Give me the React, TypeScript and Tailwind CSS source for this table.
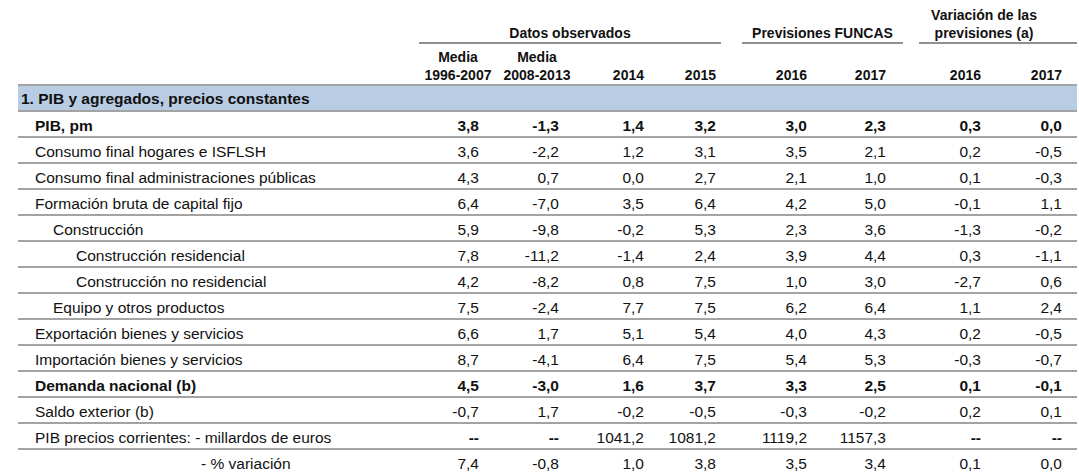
import React from 'react';

type Row = {
  label: string;
  indent: 0 | 1 | 2 | 3;
  bold?: boolean;
  values: string[];
};

const rows: Row[] = [
  { label: 'PIB, pm', indent: 0, bold: true, values: ['3,8', '-1,3', '1,4', '3,2', '3,0', '2,3', '0,3', '0,0'] },
  { label: 'Consumo final hogares e ISFLSH', indent: 0, values: ['3,6', '-2,2', '1,2', '3,1', '3,5', '2,1', '0,2', '-0,5'] },
  { label: 'Consumo final administraciones públicas', indent: 0, values: ['4,3', '0,7', '0,0', '2,7', '2,1', '1,0', '0,1', '-0,3'] },
  { label: 'Formación bruta de capital fijo', indent: 0, values: ['6,4', '-7,0', '3,5', '6,4', '4,2', '5,0', '-0,1', '1,1'] },
  { label: 'Construcción', indent: 1, values: ['5,9', '-9,8', '-0,2', '5,3', '2,3', '3,6', '-1,3', '-0,2'] },
  { label: 'Construcción residencial', indent: 2, values: ['7,8', '-11,2', '-1,4', '2,4', '3,9', '4,4', '0,3', '-1,1'] },
  { label: 'Construcción no residencial', indent: 2, values: ['4,2', '-8,2', '0,8', '7,5', '1,0', '3,0', '-2,7', '0,6'] },
  { label: 'Equipo y otros productos', indent: 1, values: ['7,5', '-2,4', '7,7', '7,5', '6,2', '6,4', '1,1', '2,4'] },
  { label: 'Exportación bienes y servicios', indent: 0, values: ['6,6', '1,7', '5,1', '5,4', '4,0', '4,3', '0,2', '-0,5'] },
  { label: 'Importación bienes y servicios', indent: 0, values: ['8,7', '-4,1', '6,4', '7,5', '5,4', '5,3', '-0,3', '-0,7'] },
  { label: 'Demanda nacional (b)', indent: 0, bold: true, values: ['4,5', '-3,0', '1,6', '3,7', '3,3', '2,5', '0,1', '-0,1'] },
  { label: 'Saldo exterior (b)', indent: 0, values: ['-0,7', '1,7', '-0,2', '-0,5', '-0,3', '-0,2', '0,2', '0,1'] },
  { label: 'PIB precios corrientes: - millardos de euros', indent: 0, values: ['--', '--', '1041,2', '1081,2', '1119,2', '1157,3', '--', '--'] },
  { label: '- % variación', indent: 3, values: ['7,4', '-0,8', '1,0', '3,8', '3,5', '3,4', '0,1', '0,0'] },
];

const grid = 'grid grid-cols-[401px_78px_80px_76px_68px_101px_81px_92px_82px]';

// right padding per numeric column, so the figures line up under the headers
const padRight = ['pr-[18px]', 'pr-[18px]', 'pr-[9px]', 'pr-[5px]', 'pr-[15px]', 'pr-[17px]', 'pr-[14px]', 'pr-[15px]'];

const indentClass = ['pl-[17px]', 'pl-[35px]', 'pl-[58px]', 'pl-[183px]'];

const years = ['2014', '2015', '2016', '2017', '2016', '2017'];

function GroupHeader() {
  return (
    <div className={`${grid} h-[44px] text-[14px] font-bold leading-[18px]`}>
      <div />
      <div className="col-span-4 flex flex-col justify-end">
        <div className="text-center">Datos observados</div>
        <div className="h-[2px] bg-[#8f8f8f]" />
      </div>
      <div className="col-span-2 flex flex-col justify-end pl-[21px]">
        <div className="text-center">Previsiones FUNCAS</div>
        <div className="h-[2px] bg-[#8f8f8f]" />
      </div>
      <div className="col-span-2 flex flex-col justify-end pl-[16px]">
        <div className="pr-[28px] text-center">
          Variación de las
          <br />
          previsiones (a)
        </div>
        <div className="h-[2px] bg-[#8f8f8f]" />
      </div>
    </div>
  );
}

function ColumnHeader() {
  return (
    <div className={`${grid} h-[40px] text-[14px] font-bold leading-[18px]`}>
      <div />
      <div className="flex flex-col justify-end pt-[4px] text-center">
        <span>Media</span>
        <span>1996-2007</span>
      </div>
      <div className="flex flex-col justify-end pt-[4px] text-center">
        <span>Media</span>
        <span>2008-2013</span>
      </div>
      {years.map((y, i) => (
        <div key={i} className={`flex items-end justify-end ${padRight[i + 2]}`}>
          {y}
        </div>
      ))}
    </div>
  );
}

function DataRow({ row }: { row: Row }) {
  return (
    <div
      className={`${grid} h-[26px] border-b-2 border-[#a3a3a3] pt-[3px] text-[15.5px] leading-[21px] ${
        row.bold ? 'font-bold' : ''
      }`}
    >
      <div className={`whitespace-nowrap ${indentClass[row.indent]}`}>{row.label}</div>
      {row.values.map((v, i) => (
        <div key={i} className={`text-right ${padRight[i]} ${v === '--' ? 'font-bold' : ''}`}>
          {v}
        </div>
      ))}
    </div>
  );
}

export default function App() {
  return (
    <div className="h-[474px] w-[1079px] overflow-hidden bg-white font-['Liberation_Sans',Arial,sans-serif] text-[#111]">
      <div className="ml-[18px] w-[1059px]">
        <GroupHeader />
        <ColumnHeader />
        <div className="h-[28px] border-y-2 border-[#a3a3a3] bg-[#b8cce4] pl-[3px] pt-[2px] text-[15.5px] font-bold leading-[22px]">
          1. PIB y agregados, precios constantes
        </div>
        {rows.map((r, i) => (
          <DataRow key={i} row={r} />
        ))}
      </div>
    </div>
  );
}
